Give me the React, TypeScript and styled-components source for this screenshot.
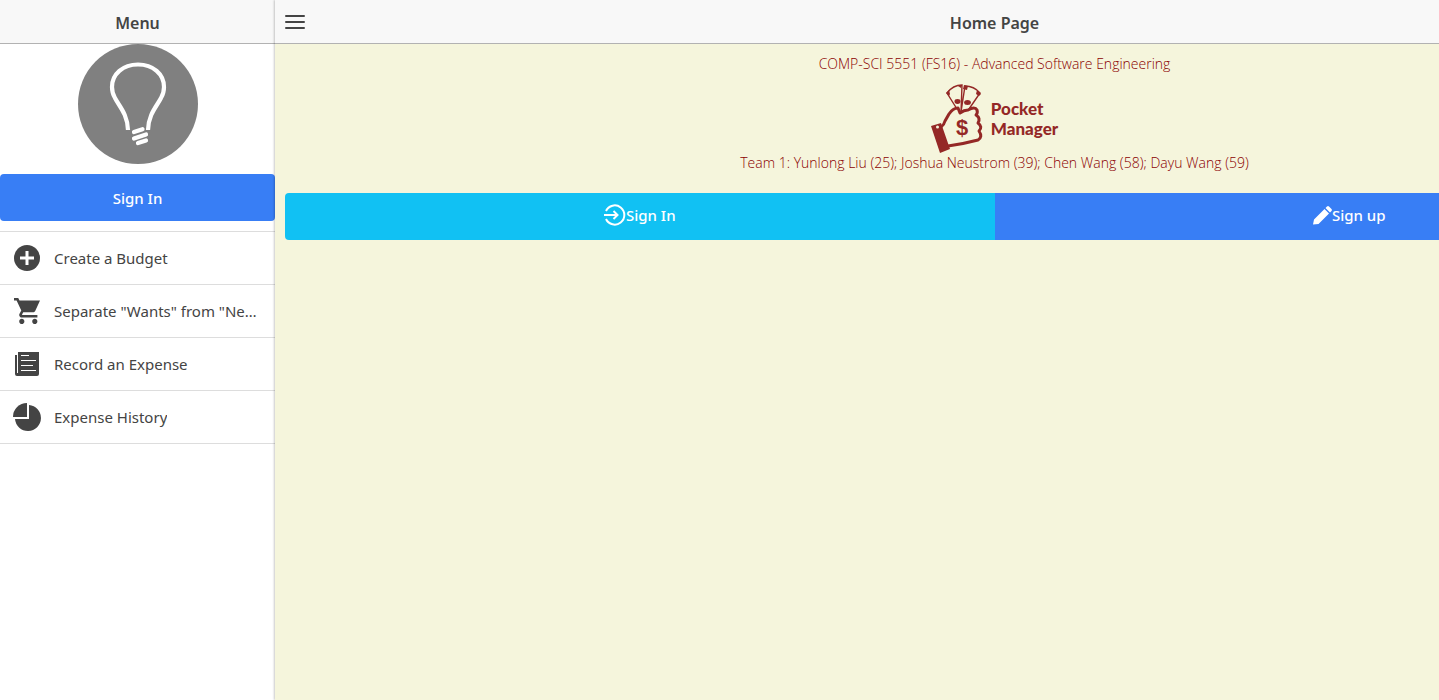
import React from "react";
import styled, { createGlobalStyle } from "styled-components";

const GlobalStyle = createGlobalStyle`
  *, *::before, *::after { box-sizing: border-box; }
  body {
    margin: 0;
    color: #444;
    font-family: "Noto Sans", "Open Sans", sans-serif;
    font-size: 14px;
    line-height: 20px;
  }
`;

const Shell = styled.div`
  display: flex;
  min-height: 100vh;
  overflow: hidden;
`;

const Sidebar = styled.aside`
  flex: 0 0 275px;
  min-width: 0;
  background: #fff;
`;

const Page = styled.main`
  flex: 0 0 100%;
  z-index: 1;
  background: #f5f5dc;
  box-shadow: -1px 0 2px rgba(0, 0, 0, 0.2), 1px 0 2px rgba(0, 0, 0, 0.2);
`;

const Bar = styled.header`
  display: grid;
  grid-template-columns: 40px 1fr 40px;
  align-items: center;
  height: 44px;
  border-bottom: 1px solid #b2b2b2;
  background: #f8f8f8;
`;

const Title = styled.h1`
  grid-column: 2;
  margin: 0;
  padding-top: 2px;
  font-size: 16px;
  font-weight: 600;
  text-align: center;
`;

const MenuToggle = styled.button`
  display: flex;
  justify-content: center;
  padding: 0;
  border: 0;
  background: none;
  color: #444;
`;

const Avatar = styled.svg`
  display: block;
  width: 120px;
  height: 120px;
  margin: 0 auto 10px;
`;

const Button = styled.button<{ $tone: string }>`
  display: flex;
  align-items: center;
  justify-content: center;
  width: 100%;
  height: 47px;
  padding: 0 12px;
  border: 0;
  border-radius: 4px;
  background: ${(p) => p.$tone};
  color: #fff;
  font-family: inherit;
  font-size: 15px;
  font-weight: 500;
  line-height: 20px;
`;

const ButtonBar = styled.div`
  display: flex;
  margin-top: 20px;
  border-radius: 4px;
  overflow: hidden;

  ${Button} {
    flex: 1;
    padding-bottom: 3px;
    border-radius: 0;
  }
`;

const MenuList = styled.nav`
  margin-top: 10px;
  border-top: 1px solid #ddd;
`;

const MenuItem = styled.a`
  display: flex;
  align-items: center;
  gap: 13px;
  height: 53px;
  padding: 0 16px 0 13px;
  border-bottom: 1px solid #ddd;
  color: #444;
  font-size: 15px;
  text-decoration: none;

  svg {
    flex: none;
  }
`;

const ItemLabel = styled.span`
  overflow: hidden;
  text-overflow: ellipsis;
  white-space: nowrap;
`;

const Content = styled.section`
  padding: 10px;
  text-align: center;
`;

const Caption = styled.p`
  margin: 0;
  color: #8b0000;
  font-family: "Open Sans", "Noto Sans", sans-serif;
  font-size: 14px;
  font-weight: 300;
`;

const Brand = styled.div`
  display: flex;
  align-items: center;
  justify-content: center;
  gap: 8px;
  height: 79px;
  padding-top: 10px;
`;

const BrandName = styled.div`
  padding-top: 1px;
  color: #942826;
  font-family: "Lato", sans-serif;
  font-size: 17px;
  font-weight: 900;
  line-height: 20px;
  text-align: left;
`;

const PlusIcon = () => (
  <svg width="28" height="28" viewBox="0 0 28 28" aria-hidden="true">
    <circle cx="14" cy="14" r="13" fill="#444" />
    <path d="M14 7v14M7 14h14" stroke="#fff" strokeWidth="3" />
  </svg>
);

const CartIcon = () => (
  <svg width="28" height="28" viewBox="0 0 28 28" aria-hidden="true">
    <path
      transform="translate(-.3 -1.6) scale(1.3)"
      fill="#444"
      d="M7 18c-1.1 0-1.99.9-1.99 2S5.9 22 7 22s2-.9 2-2-.9-2-2-2zM1 2v2h2l3.6 7.59-1.35 2.45c-.16.28-.25.61-.25.96 0 1.1.9 2 2 2h12v-2H7.42c-.14 0-.25-.11-.25-.25l.03-.12.9-1.63h7.45c.75 0 1.41-.41 1.75-1.03L21 4H5.21l-.94-2H1zm16 16c-1.1 0-1.99.9-1.99 2s.89 2 1.99 2 2-.9 2-2-.9-2-2-2z"
    />
  </svg>
);

const PaperIcon = () => (
  <svg width="28" height="28" viewBox="0 0 28 28" aria-hidden="true">
    <path fill="#444" d="M5 2h21v22a2 2 0 0 1-2 2H4a2 2 0 0 1-2-2V5h2v18h1z" />
    <path d="M8 5.500h8M8 10.500h15M8 15.500h12M8 20.500h15" stroke="#fff" strokeWidth="1" />
  </svg>
);

const PieIcon = () => (
  <svg width="28" height="28" viewBox="0 0 28 28" aria-hidden="true">
    <path fill="#444" d="M14 0v14H0A14 14 0 0 1 14 0z" />
    <path fill="#444" d="M16 2a13 13 0 1 1-14 14h14z" />
  </svg>
);

const LoginIcon = () => (
  <svg width="22" height="22" viewBox="0 0 22 22" fill="none" stroke="#fff" strokeWidth="2" aria-hidden="true">
    <path d="M2 7a9.600 9.600 0 1 1 0 8M0 11h13M9.500 7l4 4-4 4" />
  </svg>
);

const PencilIcon = () => (
  <svg width="19" height="19" viewBox="0 0 19 19" fill="#fff" aria-hidden="true">
    <path d="M0 18.500l1-5L11.500 3l4.500 4.500L5.500 18zM12.500 2l1.500-1.500q1-.8 2 0L18.500 3q.8 1 0 2L17 6.500z" />
  </svg>
);

const BurgerIcon = () => (
  <svg width="20" height="14" viewBox="0 0 20 14" aria-hidden="true">
    <path d="M1 1h18M1 7h18M1 13h18" stroke="#444" strokeWidth="2" strokeLinecap="round" />
  </svg>
);

const Bulb = () => (
  <Avatar viewBox="0 0 120 120" role="img" aria-label="Profile">
    <circle cx="60" cy="60" r="60" fill="#808080" />
    <g fill="none" stroke="#fff">
      <path
        strokeWidth="4.2"
        d="M50 86C49.500 70 41 62 37 54C34.500 50 34 47 34 43C34 30 45 20.500 60 20.500S86 30 86 43C86 47 85.500 50 83 54C79 62 70.500 70 70 86"
      />
      <path strokeWidth="4.2" strokeLinecap="round" d="M56 88l8.500-2.800M56 94.500l12-4M60 99l8-2.500" />
    </g>
  </Avatar>
);

const HandLogo = () => (
  <svg width="52" height="70" viewBox="0 0 52 70" aria-hidden="true">
    <g fill="none" stroke="#942826" strokeWidth="1.4">
      <path d="M26 25L16 9Q22 1 31 1L30 29M30 28L34 2Q43 2 49 9L38 25" />
    </g>
    <g fill="#942826">
      <path fillRule="evenodd" d="M0 42l10-3 9 26-10 4zM5 43a1.500 1.500 0 1 0 3 0a1.500 1.500 0 1 0-3 0z" />
      <ellipse cx="26.500" cy="17.500" rx="3" ry="2.400" />
      <ellipse cx="36.500" cy="18.500" rx="3.400" ry="2.500" />
      <path d="M15 9l3-3 1 4-1 2zM50 10l-4-4-1 4 3 2zM33 1l4 1-1 4-4-1zM27 2l4-1-1 3z" />
    </g>
    <path
      fill="none"
      stroke="#942826"
      strokeWidth="3"
      strokeLinejoin="round"
      d="M10 43Q13 41 14 37L18 30Q22 24 27 24L29 29Q33 26 37 26Q44 22 46 26Q47 29 45 31Q50 34 47 39Q52 43 48 47Q52 53 47 56Q32 60 17 62"
    />
    <text x="31" y="51" textAnchor="middle" fill="#942826" fontFamily="Liberation Sans, sans-serif" fontWeight="700" fontSize="22">
      $
    </text>
  </svg>
);

const menuItems = [
  { label: "Create a Budget", Icon: PlusIcon },
  { label: 'Separate "Wants" from "Needs"', Icon: CartIcon },
  { label: "Record an Expense", Icon: PaperIcon },
  { label: "Expense History", Icon: PieIcon },
];

export default function App() {
  return (
    <>
      <GlobalStyle />
      <Shell>
        <Sidebar>
          <Bar>
            <Title as="h2">Menu</Title>
          </Bar>
          <Bulb />
          <Button $tone="#387ef5">Sign In</Button>
          <MenuList>
            {menuItems.map(({ label, Icon }) => (
              <MenuItem href="#" key={label}>
                <Icon />
                <ItemLabel>{label}</ItemLabel>
              </MenuItem>
            ))}
          </MenuList>
        </Sidebar>
        <Page>
          <Bar>
            <MenuToggle aria-label="Toggle menu">
              <BurgerIcon />
            </MenuToggle>
            <Title>Home Page</Title>
          </Bar>
          <Content>
            <Caption>COMP-SCI 5551 (FS16) - Advanced Software Engineering</Caption>
            <Brand>
              <HandLogo />
              <BrandName>
                Pocket
                <br />
                Manager
              </BrandName>
            </Brand>
            <Caption>Team 1: Yunlong Liu (25); Joshua Neustrom (39); Chen Wang (58); Dayu Wang (59)</Caption>
            <ButtonBar>
              <Button $tone="#11c1f3">
                <LoginIcon />
                Sign In
              </Button>
              <Button $tone="#387ef5">
                <PencilIcon />
                Sign up
              </Button>
            </ButtonBar>
          </Content>
        </Page>
      </Shell>
    </>
  );
}
